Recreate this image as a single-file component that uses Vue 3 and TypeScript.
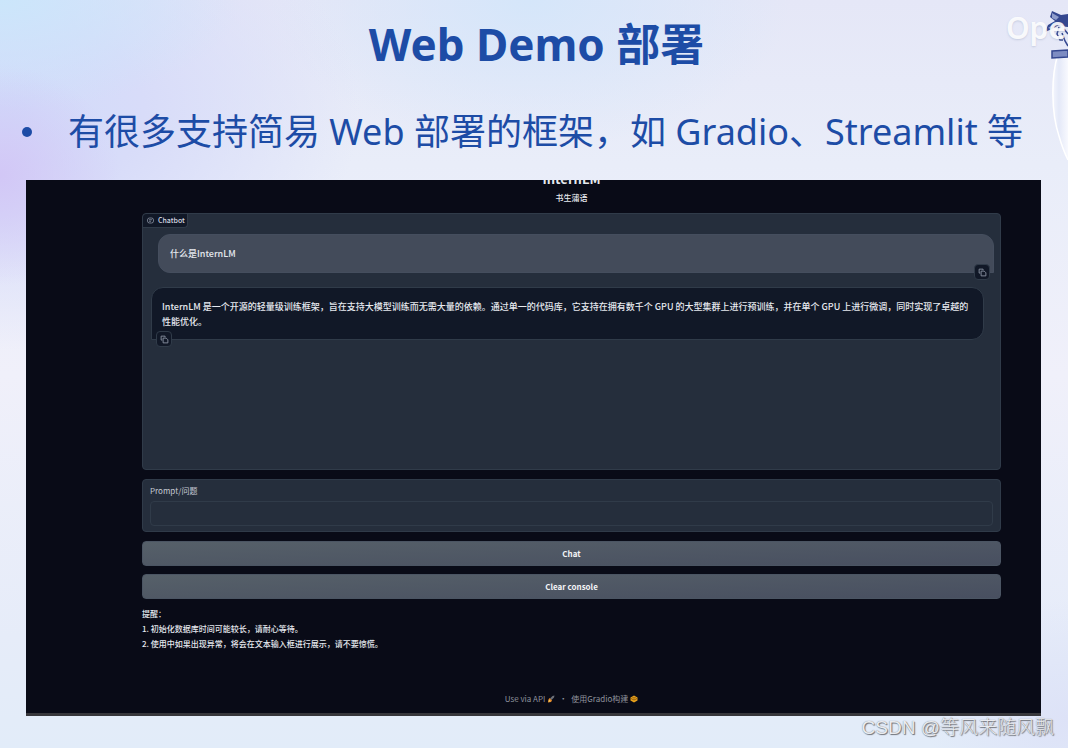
<script setup lang="ts">
import { ref } from 'vue'

const prompt = ref('')
const notes: string[] = [
  '初始化数据库时间可能较长，请耐心等待。',
  '使用中如果出现异常，将会在文本输入框进行展示，请不要惊慌。',
]
</script>

<template>
  <main class="slide">
    <h1 class="headline">Web Demo 部署</h1>
    <ul class="points">
      <li><span class="dot"></span>有很多支持简易 Web 部署的框架，如 Gradio、Streamlit 等</li>
    </ul>

    <section class="demo">
      <header class="demo-head">
        <h2>InternLM</h2>
        <p>书生蒲语</p>
      </header>

      <div class="chatbot">
        <div class="tag">
          <svg viewBox="0 0 14 14" width="7" height="7" fill="none" stroke="#8b93a3" stroke-width="1.6">
            <rect x="1" y="2" width="12" height="10" rx="4" />
            <path d="M4 5.500h6M4 8.500h4" />
          </svg>
          <span>Chatbot</span>
        </div>
        <div class="bubble user">
          什么是InternLM
          <button class="copy" type="button" aria-label="Copy">
            <svg viewBox="0 0 16 16" fill="none" stroke="#8b93a3" stroke-width="1.600">
              <path d="M4 9H2V2h7v2" />
              <path d="M5.500 5.500h5.500l3 3V14H5.500z" />
            </svg>
          </button>
        </div>
        <div class="bubble bot">
          InternLM 是一个开源的轻量级训练框架，旨在支持大模型训练而无需大量的依赖。通过单一的代码库，它支持在拥有数千个 GPU 的大型集群上进行预训练，并在单个 GPU 上进行微调，同时实现了卓越的性能优化。
          <button class="copy" type="button" aria-label="Copy">
            <svg viewBox="0 0 16 16" fill="none" stroke="#8b93a3" stroke-width="1.600">
              <path d="M4 9H2V2h7v2" />
              <path d="M5.500 5.500h5.500l3 3V14H5.500z" />
            </svg>
          </button>
        </div>
      </div>

      <div class="field">
        <label for="prompt">Prompt/问题</label>
        <input id="prompt" v-model="prompt" type="text" />
      </div>

      <button class="action" type="button">Chat</button>
      <button class="action" type="button">Clear console</button>

      <div class="notes">
        <p>提醒：</p>
        <p v-for="(note, i) in notes" :key="i">{{ i + 1 }}. {{ note }}</p>
      </div>

      <footer class="foot">
        <a href="#">Use via API
          <svg viewBox="0 0 16 16" width="8" height="8">
            <path d="M6 7L11 2l4-1-1 4-5 5z" fill="#6d7078" />
            <path d="M5 6l5 5-2 3-6 1 1-6z" fill="#e58a2c" />
            <path d="M4 9l3 3-4 2z" fill="#ffd35a" />
          </svg>
        </a>
        <span class="sep">·</span>
        <a href="#">使用Gradio构建
          <svg viewBox="0 0 16 16" width="8" height="8">
            <path d="M8 1l7 4v6l-7 4-7-4V5z" fill="#e8a21c" />
            <path d="M2 7l6 3 6-3M5 5l3 1 3-1" fill="none" stroke="#7a4a08" stroke-width="1.500" />
          </svg>
        </a>
      </footer>
    </section>

    <div class="mascot">
      <svg viewBox="0 0 34 170" width="34" height="170">
        <defs>
          <linearGradient id="orb" x1="0" x2="1">
            <stop offset="0" stop-color="#f3f5fd" />
            <stop offset="0.400" stop-color="#e4e9f8" />
            <stop offset="1" stop-color="#f8f9fe" />
          </linearGradient>
        </defs>
        <path d="M24 54C17 76 17 112 25 136Q29 150 34 160V54z" fill="url(#orb)" />
        <path d="M24 54C17 76 17 112 25 136Q29 150 34 160" fill="none" stroke="#fff" stroke-width="1.500" />
        <path d="M18 11l9 4 7-1v14l-5-2-4-1-7 4-7 3 3-7 7-4-5-4z" fill="#34478f" />
        <path d="M18 13l7 4-3 3-4-2zM14 28l6-4-3 5z" fill="#8f9dcc" />
        <path d="M24 26l10 1v19l-5-3-5-6z" fill="#e3e8f7" />
        <path d="M25 27l-2 7 3 6h3M28 33l3 8 3 5M30 29l4 5" fill="none" stroke="#34478f" stroke-width="1.500" />
        <path d="M18 51l16-1v7l-16 1z" fill="#7d8cc2" stroke="#34478f" stroke-width="1.500" />
      </svg>
      <span class="brand">Ope</span>
    </div>
    <div class="watermark">CSDN @等风来随风飘</div>
  </main>
</template>

<style>
body {
  margin: 0;
}
</style>

<style scoped>
.slide {
  position: relative;
  box-sizing: border-box;
  min-height: 100vh;
  padding: 15px 27px 31px 26px;
  overflow: hidden;
  color: #1d4ca6;
  font-family: "Noto Sans", "Noto Sans CJK SC", sans-serif;
  background:
    radial-gradient(ellipse 120px 110px at 0 175px, #d2c7f6 0%, rgba(210, 199, 246, 0) 100%),
    radial-gradient(ellipse 240px 110px at 0 0, #cbe6fb 0%, rgba(203, 230, 251, 0) 100%),
    radial-gradient(ellipse 360px 240px at 0 110px, #d0dbfa 0%, #d8dcf9 40%, rgba(222, 222, 248, 0) 100%),
    radial-gradient(ellipse 260px 150px at 530px 0, #d5e6fa 0%, rgba(213, 230, 250, 0) 100%),
    radial-gradient(ellipse 140px 120px at 100% 720px, #dde2f7 0%, rgba(221, 226, 247, 0) 100%),
    linear-gradient(180deg, #e5e7f7 0%, #e9edf9 22%, #f0f0fa 50%, #e6ecf9 85%, #e2ecf9 100%);
}
.headline {
  margin: 0;
  padding-left: 6px;
  font-size: 44px;
  line-height: 58px;
  font-weight: 700;
  text-align: center;
}
.points {
  margin: 32px 0 0;
  padding: 0;
  list-style: none;
}
.points li {
  display: flex;
  align-items: center;
  font-size: 36px;
  line-height: 54px;
  white-space: nowrap;
}
.dot {
  width: 10px;
  height: 10px;
  margin: 0 36px 0 -4px;
  border-radius: 50%;
  background: #1d4ca6;
}
.demo {
  display: flex;
  flex-direction: column;
  margin-top: 21px;
  padding: 0 40px 7px 116px;
  overflow: hidden;
  color: #e6e9ef;
  font-family: "Noto Sans CJK SC", sans-serif;
  font-size: 9px;
  line-height: 15px;
  background: #090b17;
  border-bottom: 3px solid #37373b;
}
.demo-head {
  text-align: center;
}
.demo-head h2 {
  margin: -11px 0 0;
  font-size: 13px;
  line-height: 20px;
}
.demo-head p {
  margin: 1px 0 8px;
  font-size: 8px;
  line-height: 15px;
  font-weight: 500;
}
.chatbot {
  box-sizing: border-box;
  min-height: 257px;
  padding: 0 6px 0 8px;
  border: 1px solid #303b49;
  border-radius: 4px;
  background: #252e3c;
}
.tag {
  display: flex;
  align-items: center;
  gap: 4px;
  width: max-content;
  margin-left: -8px;
  padding: 0 2px 0 4px;
  border-right: 1px solid #303b49;
  border-bottom: 1px solid #303b49;
  border-radius: 4px 0 4px 0;
  color: #d6dae2;
  background: #111827;
  font-family: "Noto Sans CJK SC", sans-serif;
  font-size: 7px;
  line-height: 13px;
  font-weight: 500;
}
.bubble {
  position: relative;
  box-sizing: border-box;
  padding: 11px 10px;
  border: 1px solid #303b49;
  font-weight: 500;
}
.user {
  margin: 6px 0 0 7px;
  padding: 11px;
  border-color: #454e5e;
  border-radius: 12px 12px 0 12px;
  background: #434b5a;
}
.bot {
  margin: 14px 10px 0 0;
  border-radius: 12px 12px 12px 0;
  background: #111827;
  padding-bottom: 10px;
}
.copy {
  position: absolute;
  bottom: -8px;
  display: grid;
  place-items: center;
  width: 16px;
  height: 16px;
  padding: 0;
  border: 1px solid #303b49;
  border-radius: 4px;
  background: #111827;
}
.copy svg {
  width: 9px;
  height: 9px;
}
.user .copy {
  right: 3px;
}
.bot .copy {
  left: 4px;
}
.field {
  display: flex;
  flex-direction: column;
  margin-top: 9px;
  padding: 3px 7px 5px;
  border: 1px solid #303b49;
  border-radius: 4px;
  background: #252e3c;
}
.field label {
  color: #c5cad4;
  font-size: 8px;
  line-height: 15px;
}
.field input {
  box-sizing: border-box;
  height: 25px;
  margin-top: 3px;
  padding: 0 6px;
  border: 1px solid #303b49;
  border-radius: 4px;
  outline: none;
  color: inherit;
  font: inherit;
  background: #252e3c;
}
.action {
  box-sizing: border-box;
  height: 25px;
  margin-top: 8px;
  padding: 0;
  border: 1px solid #4b5563;
  border-radius: 4px;
  color: #f3f4f6;
  font: inherit;
  font-size: 8px;
  font-weight: 700;
  background: linear-gradient(178deg, #566069, #484f60);
}
.field + .action {
  margin-top: 9px;
}
.notes {
  margin-top: 7px;
  font-size: 8px;
  font-weight: 500;
}
.notes p {
  margin: 0;
}
.foot {
  display: flex;
  justify-content: center;
  gap: 4px;
  margin-top: 40px;
  color: #8f939d;
  font-size: 8px;
}
.foot a {
  display: flex;
  align-items: center;
  gap: 2px;
  color: inherit;
  text-decoration: none;
}
.mascot {
  position: absolute;
  top: 0;
  right: 0;
  width: 62px;
  height: 170px;
  overflow: hidden;
}
.mascot svg {
  position: absolute;
  right: 0;
  top: 0;
}
.brand {
  position: absolute;
  left: 0;
  top: 9px;
  color: rgba(255, 255, 255, 0.9);
  font-size: 30px;
  line-height: 38px;
  font-weight: 600;
  text-shadow: 0 1px 2px rgba(150, 160, 190, 0.4);
}
.watermark {
  position: absolute;
  right: 14px;
  bottom: 7px;
  color: #e9ebef;
  font-family: "Liberation Sans", "Noto Sans CJK SC", sans-serif;
  font-size: 19px;
  line-height: 26px;
  font-weight: 300;
  text-shadow: 1px 1px 1px #6e7178, 0 0 1px #7d8087;
}
</style>
